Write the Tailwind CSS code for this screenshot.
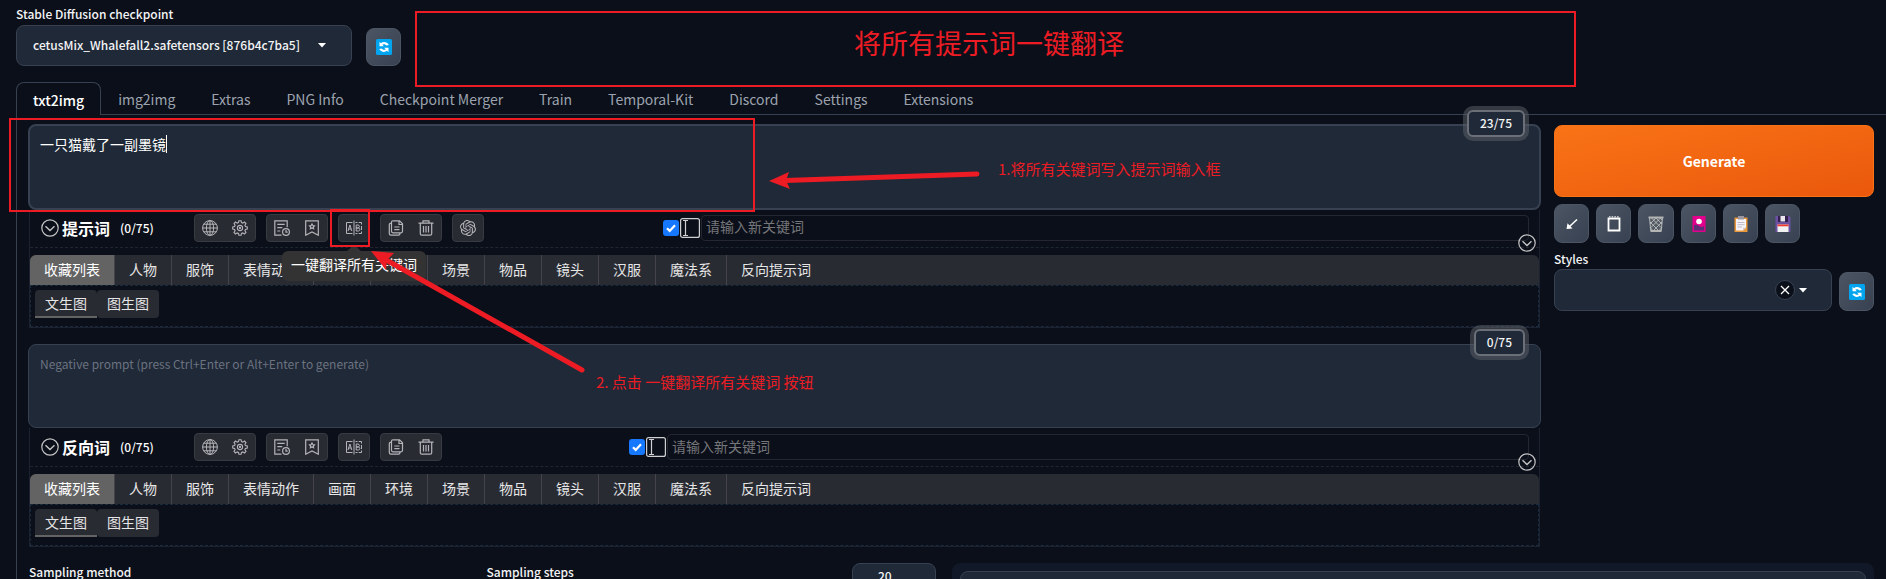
<!DOCTYPE html>
<html lang="zh-CN">
<head>
<meta charset="utf-8">
<title>Stable Diffusion</title>
<script src="https://cdn.jsdelivr.net/npm/@tailwindcss/browser@4"></script>
</head>
<body class="relative h-screen overflow-hidden bg-[#0b0f19] font-['Noto_Sans_CJK_SC',sans-serif] text-[12px] leading-4 text-gray-100">

<svg class="hidden" aria-hidden="true">
  <symbol id="refresh" viewBox="0 0 16 16">
    <rect width="16" height="16" rx="1.500" fill="#00a4ef"/>
    <path d="M3.500 2.800v4.400h4.400L6.300 5.800C7.600 4.900 9.300 5.200 10.200 6.600l2.600-.7C11.200 2.900 7.300 2.200 4.900 4.200zM12.500 13.200V8.800H8.100l1.600 1.400C8.400 11.100 6.700 10.800 5.800 9.400l-2.600.7c1.600 3 5.500 3.700 7.900 1.700z" fill="#fff"/>
  </symbol>
  <symbol id="chev" viewBox="0 0 18 18" fill="none" stroke="#c4c4c6" stroke-width="1.200">
    <circle cx="9" cy="9" r="8.200"/><path d="M4.500 7.300 9 11.500l4.500-4.200" stroke-width="1.400"/>
  </symbol>
  <symbol id="globe" viewBox="0 0 16 16" fill="none" stroke="#b4b5b9" stroke-width="1">
    <circle cx="8" cy="8" r="7.400"/><ellipse cx="8" cy="8" rx="3.600" ry="7.400"/><path d="M8 .6v14.800M.6 8h14.800M1.700 4.200h12.600M1.700 11.800h12.600"/>
  </symbol>
  <symbol id="gear" viewBox="0 0 16 16" fill="none" stroke="#b4b5b9" stroke-width="1.100">
    <path d="M6.900.7h2.200l.4 1.900 1.300.5 1.700-1.100 1.500 1.500-1.100 1.700.5 1.300 1.900.4v2.200l-1.900.4-.5 1.300 1.100 1.700-1.500 1.500-1.700-1.100-1.300.5-.4 1.900H6.900l-.4-1.900-1.300-.5L3.500 14 2 12.500l1.100-1.700-.5-1.300L.7 9.100V6.900l1.900-.4.5-1.300L2 3.500 3.500 2l1.700 1.100 1.300-.5z"/><circle cx="8" cy="8" r="2.600"/><circle cx="8" cy="8" r=".6"/>
  </symbol>
  <symbol id="history" viewBox="0 0 16 16" fill="none" stroke="#b4b5b9" stroke-width="1.200">
    <path d="M7.500 15.200H.8V.8h12.400v6.400M3.300 4.300h7.400M3.300 7.600h5M3.300 11h3"/><circle cx="12" cy="12" r="3.400"/><path d="M12 10v2.200h1.700"/>
  </symbol>
  <symbol id="bookmark" viewBox="0 0 16 16" fill="none" stroke="#b4b5b9" stroke-width="1.200">
    <path d="M1.700.8h12.600v14.400L8 12l-6.300 3.200z"/><path d="m8 4 .8 1.500 1.700.3-1.200 1.200.3 1.700L8 8l-1.600.7.3-1.700-1.200-1.200 1.700-.3z"/>
  </symbol>
  <symbol id="translate" viewBox="0 0 16 16" fill="none" stroke="#b4b5b9" stroke-width="1">
    <path d="M6.500 2.500h-6v11h6M8 .5v15M9.500 2.500h2m1.200 0h2.800v2m0 1.500v4m0 1.500v2h-2.800m-1.200 0h-2"/><path d="m2 11 1.900-6 1.900 6M2.700 9h2.500M10.200 5v6h2.100c2.100 0 2-3 0-3h-2.100 1.800c1.900 0 1.900-3 0-3z"/>
  </symbol>
  <symbol id="copy" viewBox="0 0 16 16" fill="none" stroke="#b4b5b9" stroke-width="1.200">
    <path d="M5 .8h6.500l3 3v7.500q0 1.500-1.500 1.500H5q-1.500 0-1.500-1.500v-9Q3.500.8 5 .8zM11 1v3.500h3.500M3.500 3.200H3Q1.300 3.200 1.300 5v8.500q0 1.700 1.700 1.700h7.500q1.500 0 1.500-2M6.300 7h5.200M6.300 9.700h5.200"/>
  </symbol>
  <symbol id="trash" viewBox="0 0 16 16" fill="none" stroke="#b4b5b9" stroke-width="1.200">
    <path d="M.5 3.200h15M5 3V.8h6V3M2.300 3.200v10.500q0 1.500 1.500 1.500h8.400q1.500 0 1.500-1.500V3.200M5.500 6v6.500M8 6v6.500M10.500 6v6.500"/>
  </symbol>
  <symbol id="knot" viewBox="0 0 24 24" fill="#b4b5b9">
    <path d="M22.280 9.820a5.980 5.980 0 0 0-.52-4.910 6.050 6.050 0 0 0-6.510-2.900A6.070 6.070 0 0 0 4.980 4.180a5.980 5.980 0 0 0-4 2.900 6.050 6.050 0 0 0 .74 7.100 5.980 5.980 0 0 0 .51 4.910 6.050 6.050 0 0 0 6.520 2.900A5.980 5.980 0 0 0 13.260 24a6.060 6.060 0 0 0 5.770-4.210 5.990 5.990 0 0 0 4-2.900 6.060 6.060 0 0 0-.75-7.070zm-9.020 12.610a4.480 4.480 0 0 1-2.880-1.040l.14-.08 4.780-2.760a.8.8 0 0 0 .39-.68v-6.740l2.020 1.170a.07.07 0 0 1 .04.05v5.580a4.500 4.500 0 0 1-4.490 4.500zM3.600 18.300a4.470 4.470 0 0 1-.54-3.010l.14.09 4.780 2.760a.77.77 0 0 0 .78 0l5.840-3.370v2.330a.08.08 0 0 1-.03.060L9.740 19.950a4.500 4.500 0 0 1-6.140-1.650zM2.340 7.900a4.490 4.490 0 0 1 2.370-1.980v5.680a.77.77 0 0 0 .39.680l5.810 3.350-2.020 1.170a.08.08 0 0 1-.07 0l-4.830-2.790A4.500 4.500 0 0 1 2.340 7.870zm16.600 3.860L13.100 8.360l2.020-1.160a.08.08 0 0 1 .07 0l4.830 2.790a4.490 4.490 0 0 1-.68 8.100v-5.680a.79.79 0 0 0-.4-.65zm2.010-3.030-.14-.08-4.770-2.780a.78.78 0 0 0-.79 0L9.410 9.230V6.900a.07.07 0 0 1 .03-.06l4.830-2.790a4.500 4.500 0 0 1 6.680 4.660zM8.310 12.860l-2.020-1.160a.08.08 0 0 1-.04-.06V6.070a4.500 4.500 0 0 1 7.380-3.450l-.14.08-4.780 2.760a.8.8 0 0 0-.4.680zm1.100-2.360L12 9l2.600 1.500v3L12 15l-2.600-1.500z"/>
  </symbol>
  <symbol id="cursor" viewBox="0 0 20 20" fill="none" stroke="#d0d0d2" stroke-width="1.200">
    <rect x=".6" y=".6" width="18.800" height="18.800" rx="2"/><path d="M3 2.500h5M3 17.500h5M5.500 2.500v15"/>
  </symbol>
</svg>

<header class="flex items-end px-4 pt-1">
  <div class="w-[336px]">
    <label for="ckpt" class="block h-[21px] pt-[2px] font-medium">Stable Diffusion checkpoint</label>
    <div class="relative">
      <select id="ckpt" class="h-[41px] w-full appearance-none rounded-lg border border-[#374151] bg-[#1f2937] px-4 pb-[2px] text-[12px] font-medium outline-none"><option>cetusMix_Whalefall2.safetensors [876b4c7ba5]</option></select>
      <svg class="pointer-events-none absolute top-[18px] left-[302px] h-[5px] w-2" viewBox="0 0 8 5"><path d="M0 0h8L4 4.500z" fill="#fff"/></svg>
    </div>
  </div>
  <button aria-label="Refresh checkpoints" class="ml-[14px] flex h-[38px] w-[35px] items-center justify-center rounded-lg border border-[#4b5563] bg-linear-to-br from-[#4b5563] to-[#374151]"><svg class="size-4"><use href="#refresh"/></svg></button>
</header>

<nav class="mt-4 ml-4 flex h-[33px] text-[14px] text-[#9ca3af]">
  <button class="z-10 rounded-t-lg border border-b-0 border-[#374151] bg-[#0b0f19] px-4 pt-[2px] font-medium text-white">txt2img</button>
  <div class="flex flex-1 gap-[2px] border-b border-[#374151] pt-[2px]">
    <button class="px-[17px]">img2img</button><button class="px-[17px]">Extras</button><button class="px-[17px]">PNG Info</button><button class="px-[17px]">Checkpoint Merger</button><button class="px-[17px]">Train</button><button class="px-[17px]">Temporal-Kit</button><button class="px-[17px]">Discord</button><button class="px-[17px]">Settings</button><button class="px-[17px]">Extensions</button>
  </div>
</nav>

<main class="ml-4 border-l border-[#374151] pt-[9px] pr-3 pl-[11px]">
  <div class="grid grid-cols-[minmax(0,1fr)_320px] gap-[13px]">
    <div>
      <div class="relative">
        <textarea aria-label="Prompt" class="block h-[86px] w-full resize-none rounded-lg border-2 border-[#374151] bg-[#1f2937] px-[10px] py-2 text-[14px] leading-5 text-white outline-none">一只猫戴了一副墨镜</textarea>
        <span class="absolute top-[11px] left-[138px] h-[18px] w-px bg-white"></span>
        <span class="absolute -top-[14px] right-4 rounded-md border-2 border-[#6b7078] bg-[#1f2937] px-[11px] pb-[2px] text-[12px] font-medium leading-[21px] ring-4 ring-[#60646c]/50">23/75</span>
      </div>
      <section class="mr-px ml-px border border-t-0 border-[#1c2230]">
        <div class="relative flex h-[38px] items-center border-b border-dashed border-[#1f2630] pr-[10px] pb-[2px] pl-[11px]">
          <svg class="size-[18px]"><use href="#chev"/></svg>
          <h2 class="ml-[3px] text-[16px] font-bold text-white">提示词</h2><span class="ml-[10px] w-[74px] text-[12px] font-medium text-white">(0/75)</span>
          <div class="flex gap-[10px]">
            <div class="flex h-7 rounded border border-[#383a42] bg-[#292b33]"><button aria-label="语言" class="grid w-[30px] place-items-center"><svg class="size-4"><use href="#globe"/></svg></button><button aria-label="设置" class="grid w-[30px] place-items-center"><svg class="size-4"><use href="#gear"/></svg></button></div>
            <div class="flex h-7 rounded border border-[#383a42] bg-[#292b33]"><button aria-label="历史" class="grid w-[30px] place-items-center"><svg class="size-4"><use href="#history"/></svg></button><button aria-label="收藏" class="grid w-[30px] place-items-center"><svg class="size-4"><use href="#bookmark"/></svg></button></div>
            <div class="flex h-7 rounded border border-[#383a42] bg-[#292b33]"><button aria-label="翻译" class="grid w-[30px] place-items-center"><svg class="size-4"><use href="#translate"/></svg></button></div>
            <div class="flex h-7 rounded border border-[#383a42] bg-[#292b33]"><button aria-label="复制" class="grid w-[30px] place-items-center"><svg class="size-4"><use href="#copy"/></svg></button><button aria-label="删除" class="grid w-[30px] place-items-center"><svg class="size-4"><use href="#trash"/></svg></button></div>
            <div class="flex h-7 rounded border border-[#383a42] bg-[#292b33]"><button aria-label="ChatGPT" class="grid w-[30px] place-items-center"><svg class="size-4"><use href="#knot"/></svg></button></div>
          </div>
          <label class="relative ml-[179px] size-4 shrink-0"><input type="checkbox" checked aria-label="启用" class="block size-4 appearance-none rounded-[3px] bg-[#1677ff]"><svg class="absolute inset-0 size-4" viewBox="0 0 16 16"><path d="m4 8.200 2.700 2.700L12 5.300" fill="none" stroke="#fff" stroke-width="2.200"/></svg></label>
          <svg class="ml-px size-5 shrink-0"><use href="#cursor"/></svg>
          <input aria-label="新关键词" placeholder="请输入新关键词" class="ml-px h-[26px] min-w-0 flex-1 rounded border border-[#24272f] bg-transparent px-1 pb-[3px] text-[14px] placeholder:text-[#75767a]">
          <button aria-label="展开" class="absolute right-[3px] -bottom-[5px] size-[18px]"><svg class="size-[18px]"><use href="#chev"/></svg></button>
        </div>
        <div class="mt-[7px] flex h-[30px] overflow-hidden rounded-t-md bg-[#292b33] text-[14px] text-[#e6e6e6]">
          <button class="border-r border-[#45444a] bg-[#636363] px-[14px] pb-[2px] text-white">收藏列表</button><button class="border-r border-[#45444a] px-[14px] pb-[2px]">人物</button><button class="border-r border-[#45444a] px-[14px] pb-[2px]">服饰</button><button class="border-r border-[#45444a] px-[14px] pb-[2px]">表情动作</button><button class="border-r border-[#45444a] px-[14px] pb-[2px]">画面</button><button class="border-r border-[#45444a] px-[14px] pb-[2px]">环境</button><button class="border-r border-[#45444a] px-[14px] pb-[2px]">场景</button><button class="border-r border-[#45444a] px-[14px] pb-[2px]">物品</button><button class="border-r border-[#45444a] px-[14px] pb-[2px]">镜头</button><button class="border-r border-[#45444a] px-[14px] pb-[2px]">汉服</button><button class="border-r border-[#45444a] px-[14px] pb-[2px]">魔法系</button><button class="px-[14px] pb-[2px]">反向提示词</button>
        </div>
        <div class="flex h-[42px] items-start border border-dashed border-[#1a2b3d] pt-1 pl-1 text-[14px] text-[#e6e6e6]">
          <button class="h-7 rounded-t border-b-2 border-[#636363] bg-[#292b33] px-[10px]">文生图</button><button class="h-7 rounded bg-[#292b33] px-[10px] pb-[2px]">图生图</button>
        </div>
      </section>

      <div class="relative mt-4">
        <textarea aria-label="Negative prompt" placeholder="Negative prompt (press Ctrl+Enter or Alt+Enter to generate)" class="block h-[84px] w-full resize-none rounded-lg border border-[#374151] bg-[#1f2937] px-[11px] py-[9px] text-[12px] leading-5 outline-none placeholder:text-[#6b7280]"></textarea>
        <span class="absolute -top-[15px] right-4 rounded-md border-2 border-[#6b7078] bg-[#1f2937] px-[11px] pb-[2px] text-[12px] font-medium leading-[21px] ring-4 ring-[#60646c]/50">0/75</span>
      </div>
      <section class="mr-px ml-px border border-t-0 border-[#1c2230]">
        <div class="relative flex h-[39px] items-center border-b border-dashed border-[#1f2630] pr-[10px] pl-[11px]">
          <svg class="size-[18px]"><use href="#chev"/></svg>
          <h2 class="ml-[3px] text-[16px] font-bold text-white">反向词</h2><span class="ml-[10px] w-[74px] text-[12px] font-medium text-white">(0/75)</span>
          <div class="flex gap-[10px]">
            <div class="flex h-7 rounded border border-[#383a42] bg-[#292b33]"><button aria-label="语言" class="grid w-[30px] place-items-center"><svg class="size-4"><use href="#globe"/></svg></button><button aria-label="设置" class="grid w-[30px] place-items-center"><svg class="size-4"><use href="#gear"/></svg></button></div>
            <div class="flex h-7 rounded border border-[#383a42] bg-[#292b33]"><button aria-label="历史" class="grid w-[30px] place-items-center"><svg class="size-4"><use href="#history"/></svg></button><button aria-label="收藏" class="grid w-[30px] place-items-center"><svg class="size-4"><use href="#bookmark"/></svg></button></div>
            <div class="flex h-7 rounded border border-[#383a42] bg-[#292b33]"><button aria-label="翻译" class="grid w-[30px] place-items-center"><svg class="size-4"><use href="#translate"/></svg></button></div>
            <div class="flex h-7 rounded border border-[#383a42] bg-[#292b33]"><button aria-label="复制" class="grid w-[30px] place-items-center"><svg class="size-4"><use href="#copy"/></svg></button><button aria-label="删除" class="grid w-[30px] place-items-center"><svg class="size-4"><use href="#trash"/></svg></button></div>
          </div>
          <label class="relative ml-[187px] size-4 shrink-0"><input type="checkbox" checked aria-label="启用" class="block size-4 appearance-none rounded-[3px] bg-[#1677ff]"><svg class="absolute inset-0 size-4" viewBox="0 0 16 16"><path d="m4 8.200 2.700 2.700L12 5.300" fill="none" stroke="#fff" stroke-width="2.200"/></svg></label>
          <svg class="ml-px size-5 shrink-0"><use href="#cursor"/></svg>
          <input aria-label="新关键词" placeholder="请输入新关键词" class="ml-px h-[26px] min-w-0 flex-1 rounded border border-[#24272f] bg-transparent px-1 pb-[3px] text-[14px] placeholder:text-[#75767a]">
          <button aria-label="展开" class="absolute right-[3px] -bottom-[5px] size-[18px]"><svg class="size-[18px]"><use href="#chev"/></svg></button>
        </div>
        <div class="mt-[7px] flex h-[30px] overflow-hidden rounded-t-md bg-[#292b33] text-[14px] text-[#e6e6e6]">
          <button class="border-r border-[#45444a] bg-[#636363] px-[14px] pb-[2px] text-white">收藏列表</button><button class="border-r border-[#45444a] px-[14px] pb-[2px]">人物</button><button class="border-r border-[#45444a] px-[14px] pb-[2px]">服饰</button><button class="border-r border-[#45444a] px-[14px] pb-[2px]">表情动作</button><button class="border-r border-[#45444a] px-[14px] pb-[2px]">画面</button><button class="border-r border-[#45444a] px-[14px] pb-[2px]">环境</button><button class="border-r border-[#45444a] px-[14px] pb-[2px]">场景</button><button class="border-r border-[#45444a] px-[14px] pb-[2px]">物品</button><button class="border-r border-[#45444a] px-[14px] pb-[2px]">镜头</button><button class="border-r border-[#45444a] px-[14px] pb-[2px]">汉服</button><button class="border-r border-[#45444a] px-[14px] pb-[2px]">魔法系</button><button class="px-[14px] pb-[2px]">反向提示词</button>
        </div>
        <div class="flex h-[42px] items-start border border-dashed border-[#1a2b3d] pt-1 pl-1 text-[14px] text-[#e6e6e6]">
          <button class="h-7 rounded-t border-b-2 border-[#636363] bg-[#292b33] px-[10px]">文生图</button><button class="h-7 rounded bg-[#292b33] px-[10px] pb-[2px]">图生图</button>
        </div>
      </section>
    </div>

    <aside>
      <button class="mt-px block h-[72px] w-full rounded-lg border border-[#f97316] bg-linear-to-br from-[#f97316] to-[#ea580c] text-[14px] font-bold text-white">Generate</button>
      <div class="mt-[7px] flex gap-[7px]">
        <button aria-label="Read parameters" class="grid h-[39px] w-[35px] place-items-center rounded-lg border border-[#4b5563] bg-linear-to-br from-[#4b5563] to-[#374151]"><svg class="size-4" viewBox="0 0 16 16"><path d="m13 3.500-7.500 7" stroke="#fff" stroke-width="1.600"/><path d="m2.500 13 1-5.800 5 5.300z" fill="#fff"/></svg></button>
        <button aria-label="Clear prompt" class="grid h-[39px] w-[35px] place-items-center rounded-lg border border-[#4b5563] bg-linear-to-br from-[#4b5563] to-[#374151]"><svg class="size-4" viewBox="0 0 16 16"><path d="M2.500 2.500h11v12h-11z" fill="none" stroke="#fff" stroke-width="1.800"/><path d="M3 .8h10" stroke="#fff" stroke-dasharray="1.500 1.200"/></svg></button>
        <button aria-label="Delete" class="grid h-[39px] w-9 place-items-center rounded-lg border border-[#4b5563] bg-linear-to-br from-[#4b5563] to-[#374151]"><svg class="size-4" viewBox="0 0 16 16"><path d="M1 1.500h14l-1.500 14h-11z" fill="#555b62"/><path d="M1.500 2 2.800 15M14.500 2l-1.300 13M2 6l9 9M2 11l3 4M3.500 2l9.500 9.500M8 2l6 6M12.500 2 14 4M14 6l-9 9M14 11l-3 4M12.500 2 3 11.500M8 2 2 8" stroke="#b9bdc1" stroke-width=".9"/><path d="M.5 1.500h15M2.500 15h11" stroke="#b4b4b4" stroke-width="1.800"/></svg></button>
        <button aria-label="Show extra networks" class="grid h-[39px] w-[35px] place-items-center rounded-lg border border-[#4b5563] bg-linear-to-br from-[#4b5563] to-[#374151]"><svg class="size-4" viewBox="0 0 16 16"><path d="M1.500 0h13v16h-13z" fill="#e3008c"/><path d="M3 9q2.500-1 5 1t5 0v4.500H3z" fill="#5c2e75"/><circle cx="8" cy="5.500" r="2.800" fill="#fff"/></svg></button>
        <button aria-label="Apply styles" class="grid h-[39px] w-[35px] place-items-center rounded-lg border border-[#4b5563] bg-linear-to-br from-[#4b5563] to-[#374151]"><svg class="size-4" viewBox="0 0 16 16"><path d="M1.500 1.500h13V16h-13z" fill="#e8973a"/><path d="M3 3h10v8.500L10 14.500H3z" fill="#f5f3f7"/><path d="M13 11.500h-3v3z" fill="#cfcbd4"/><path d="M5 0h6v3.500H5z" fill="#9a97a0"/><path d="M4.500 6.500h7M4.500 8.700h7M4.500 11h4.500" stroke="#b9b4c0" stroke-width=".9"/></svg></button>
        <button aria-label="Save style" class="grid h-[39px] w-[35px] place-items-center rounded-lg border border-[#4b5563] bg-linear-to-br from-[#4b5563] to-[#374151]"><svg class="size-4" viewBox="0 0 16 16"><path d="M.5 0h13.500L15.500 1.500V16H.5z" fill="#6b50a2"/><path d="M3 0h10v6H3z" fill="#33204c"/><path d="M5.500 0h4.500v5.500H5.500z" fill="#e9e6ee"/><path d="M2.500 8.500h11V16h-11z" fill="#f2f2f2"/><path d="M2.500 8.500h11v1.800h-11z" fill="#f03a2e"/></svg></button>
      </div>
      <div class="mt-2 flex items-end gap-[7px]">
        <div class="min-w-0 flex-1">
          <label for="styles" class="block h-[18px] font-medium">Styles</label>
          <div class="relative">
            <select id="styles" class="block h-[42px] w-full appearance-none rounded-lg border border-[#374151] bg-[#1f2937]"><option></option></select>
            <button aria-label="Clear styles" class="absolute top-[11px] right-[37px] grid size-5 place-items-center rounded-full border border-[#374151] bg-[#0b0f19]"><svg class="size-[10px]" viewBox="0 0 10 10"><path d="m1 1 8 8M9 1 1 9" stroke="#fff" stroke-width="1.300"/></svg></button>
            <svg class="pointer-events-none absolute top-[19px] right-[25px] h-[5px] w-2" viewBox="0 0 8 5"><path d="M0 0h8L4 4.500z" fill="#fff"/></svg>
          </div>
        </div>
        <button aria-label="Refresh styles" class="grid h-[39px] w-[35px] place-items-center rounded-lg border border-[#4b5563] bg-linear-to-br from-[#4b5563] to-[#374151]"><svg class="size-4"><use href="#refresh"/></svg></button>
      </div>
    </aside>
  </div>

  <div class="mt-4 grid grid-cols-[907fr_922fr] gap-4 pl-px">
    <div class="flex gap-2 font-medium">
      <label for="method" class="flex-1 pt-px">Sampling method</label>
      <div class="flex flex-1 justify-between"><label for="steps" class="pt-px">Sampling steps</label><input id="steps" value="20" class="h-6 w-[84px] rounded-lg border border-[#374151] bg-[#1f2937] px-[25px] text-[12px] outline-none"></div>
    </div>
    <div class="h-10 rounded-t-lg bg-[#111827] px-2 pt-2"><div class="h-8 rounded-t-lg border border-[#374151] bg-[#1f2937]"></div></div>
  </div>
</main>

<div class="pointer-events-none absolute inset-0 text-[15px] leading-5 text-[#ed1c24]">
  <div role="tooltip" class="absolute top-[251px] left-[282px] rounded-md bg-[#333] px-[9px] pt-[3px] pb-[7px] text-[14px] text-white">一键翻译所有关键词<svg class="absolute -top-[6px] left-[65px] h-[6px] w-[14px]" viewBox="0 0 14 6"><path d="M0 6 7 0l7 6z" fill="#333"/></svg></div>
  <div class="absolute top-[11px] left-[415px] h-[76px] w-[1161px] border-2 border-current"></div>
  <div class="absolute top-[118px] left-[9px] h-[94px] w-[746px] border-2 border-current"></div>
  <div class="absolute top-[209px] left-[330px] h-[38px] w-10 border-2 border-current"></div>
  <p class="absolute top-[23px] left-[854px] text-[27px] leading-10">将所有提示词一键翻译</p>
  <p class="absolute top-[159px] left-[998px]">1.将所有关键词写入提示词输入框</p>
  <p class="absolute top-[372px] left-[596px]">2. 点击 一键翻译所有关键词 按钮</p>
  <svg class="absolute top-0 left-0 h-[579px] w-[1000px]" viewBox="0 0 1000 579" fill="currentColor" stroke="currentColor" stroke-linecap="round">
    <path d="M977 174 785 180.500M582 370 388 261" stroke-width="5"/>
    <path stroke="none" d="m769 181 20-9-3 8.500 4 8.500zM371 251l23 2-7 7-1 10z"/>
  </svg>
</div>
</body>
</html>
